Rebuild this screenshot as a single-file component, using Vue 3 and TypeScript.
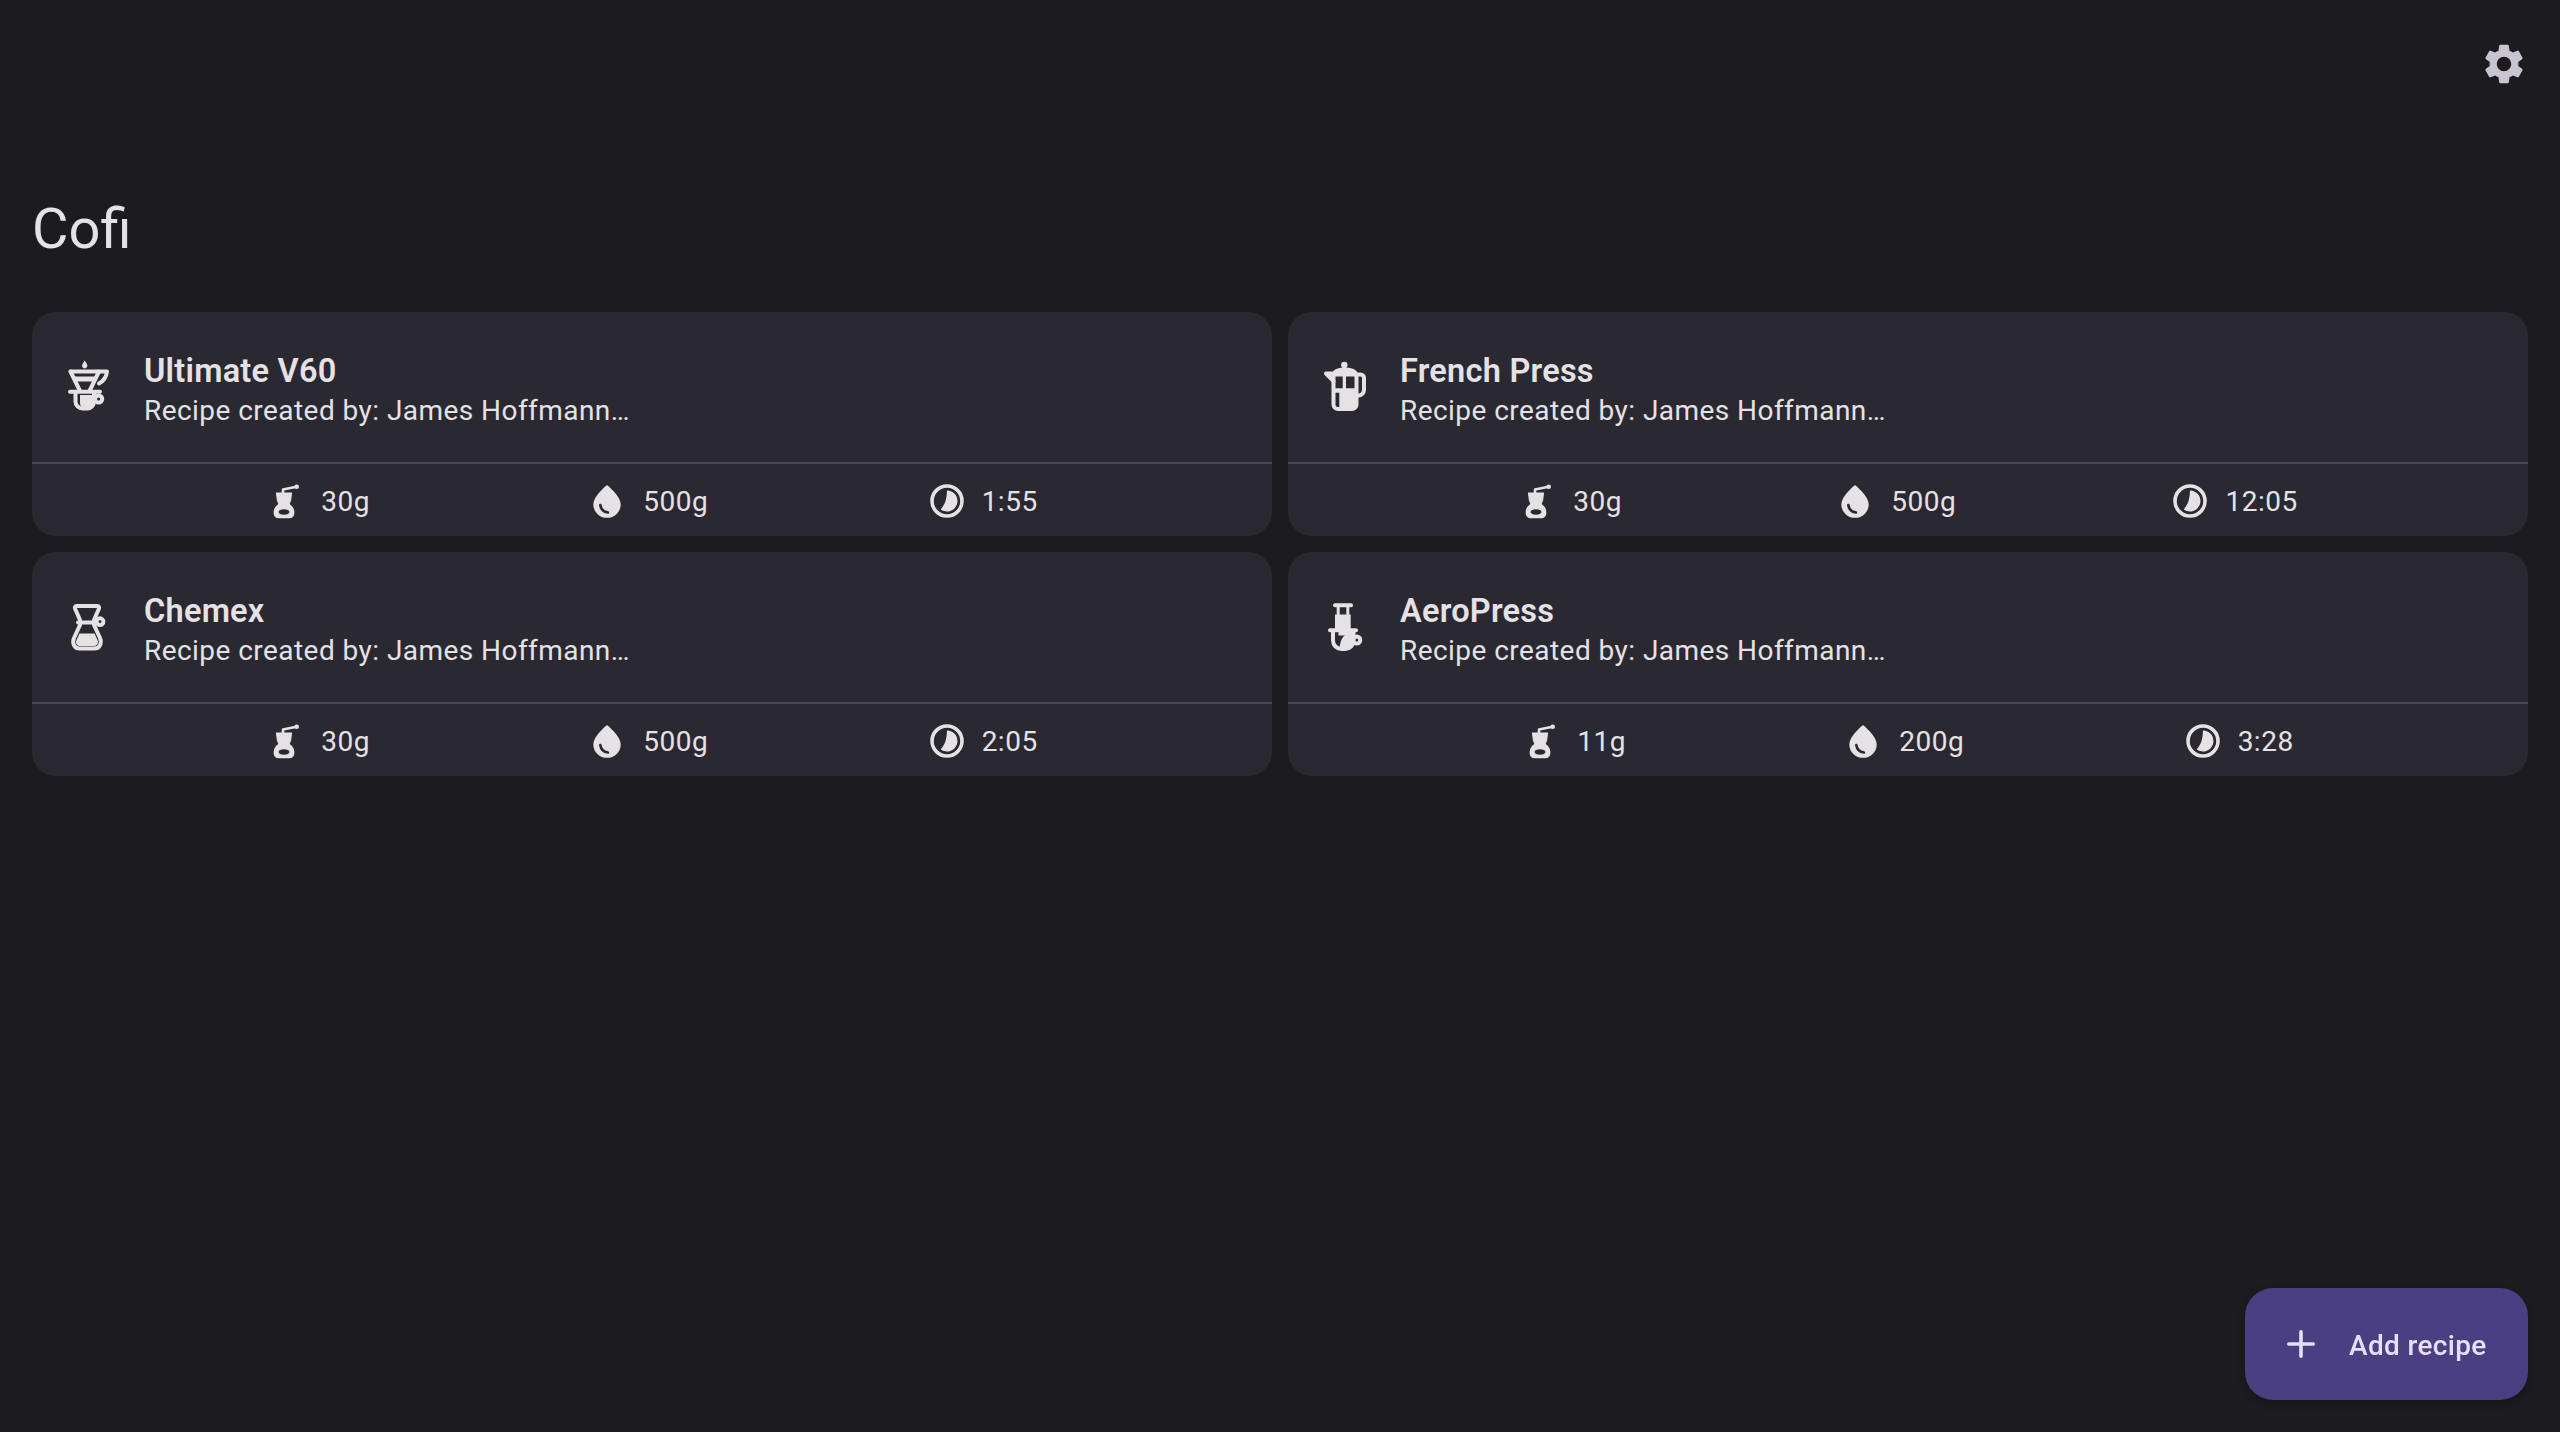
<script setup lang="ts">
interface Recipe {
  name: string
  icon: 'v60' | 'press' | 'chemex' | 'aero'
  coffee: string
  water: string
  time: string
}

const recipes: Recipe[] = [
  { name: 'Ultimate V60', icon: 'v60', coffee: '30g', water: '500g', time: '1:55' },
  { name: 'French Press', icon: 'press', coffee: '30g', water: '500g', time: '12:05' },
  { name: 'Chemex', icon: 'chemex', coffee: '30g', water: '500g', time: '2:05' },
  { name: 'AeroPress', icon: 'aero', coffee: '11g', water: '200g', time: '3:28' },
]
</script>

<template>
  <div class="page">
    <header class="top">
      <svg class="gear" viewBox="0 0 24 24" fill="currentColor">
        <path d="M19.14 12.94c.04-.3.06-.61.06-.94 0-.32-.02-.64-.07-.94l2.03-1.58c.18-.14.23-.41.12-.61l-1.92-3.32c-.12-.22-.37-.29-.59-.22l-2.39.96c-.5-.38-1.03-.7-1.62-.94l-.36-2.54c-.04-.24-.24-.41-.48-.41h-3.84c-.24 0-.43.17-.47.41l-.36 2.54c-.59.24-1.13.57-1.62.94l-2.39-.96c-.22-.08-.47 0-.59.22L2.74 8.87c-.12.21-.08.47.12.61l2.03 1.58c-.05.3-.09.63-.09.94s.02.64.07.94l-2.03 1.58c-.18.14-.23.41-.12.61l1.92 3.32c.12.22.37.29.59.22l2.39-.96c.5.38 1.03.7 1.62.94l.36 2.54c.05.24.24.41.48.41h3.84c.24 0 .44-.17.47-.41l.36-2.54c.59-.24 1.13-.56 1.62-.94l2.39.96c.22.08.47 0 .59-.22l1.92-3.32c.12-.22.07-.47-.12-.61l-2.01-1.58zM12 15.6c-1.98 0-3.6-1.62-3.6-3.6s1.62-3.6 3.6-3.6 3.6 1.62 3.6 3.6-1.62 3.6-3.6 3.6z" />
      </svg>
    </header>

    <h1 class="title">Cofi</h1>

    <main class="grid">
      <article v-for="r in recipes" :key="r.name" class="card">
        <div class="head">
          <svg class="method" viewBox="0 0 64 64" fill="none" stroke="currentColor" stroke-width="4" stroke-linecap="round" stroke-linejoin="round">
            <g v-if="r.icon === 'v60'">
              <path d="M28.700 6.500l2.300 3.800a2.700 2.700 0 1 1-4.600 0z" fill="currentColor" stroke="none" />
              <path d="M14.500 17.500H51C50.500 22 47.500 27 43 29.500" />
              <path d="M14.500 17.500L24 37M43 17.500L33.500 37" />
              <path d="M17.500 22.500H40.500L38.300 27.500H20z" fill="currentColor" stroke="none" />
              <path d="M14 37.800H44" />
              <path d="M19.500 38V47.500a7 7 0 0 0 7 7h5A7 7 0 0 0 38 47.500V38" />
              <path d="M24 41H37V47.500A5.500 5.500 0 0 1 31.500 53H27C25 53 24 51 24 49z" fill="currentColor" stroke="none" />
              <circle cx="42.600" cy="45" r="3.600" />
            </g>
            <g v-else-if="r.icon === 'press'">
              <circle cx="32.300" cy="11" r="3.200" fill="currentColor" stroke="none" />
              <path d="M22 20C22 16.500 27 15 32.500 15S44 16.500 44 20V21H22z" fill="currentColor" stroke="currentColor" stroke-width="3" />
              <path d="M14 19.500H22M14 19.500L21.500 27" />
              <path d="M21.500 21V50.500A4.500 4.500 0 0 0 26 55H40A4.500 4.500 0 0 0 44.500 50.500V21" />
              <path d="M44.500 20.500H48.500A3.500 3.500 0 0 1 52 24V36A5.500 5.500 0 0 1 46.500 41.500H44.500" />
              <path d="M30.700 21H34V34.300H43V54H27.300V38.700H23V34.300H30.700z" fill="currentColor" stroke="none" />
            </g>
            <g v-else-if="r.icon === 'chemex'">
              <path d="M20.500 12H41.500A1.800 1.800 0 0 1 43 14.500L38 26V31L44 44C46 49 44 54.500 38.500 54.500H23.500C18 54.500 16 49 18 44L24 31V26L19 14.500A1.800 1.800 0 0 1 20.500 12Z" />
              <path d="M22 28.500H40" />
              <circle cx="44" cy="27.700" r="3.400" />
              <path d="M23.500 39.500H38.500L41.500 46C43 49.500 41 52 38 52H24C21 52 19 49.500 20.500 46Z" fill="currentColor" stroke="none" />
            </g>
            <g v-else>
              <path d="M23 11.300H39" />
              <path d="M26.200 12V22M35.800 12V22" stroke-width="3" stroke-linecap="butt" />
              <path d="M23 20.500H38.700V36H23z" fill="currentColor" stroke="none" />
              <path d="M18 36.300H44" />
              <path d="M21 37V46.500A8.500 8.500 0 0 0 29.500 55H33A8.500 8.500 0 0 0 41.500 46.500V38" />
              <path d="M26.500 38H41V46C41 50 37 53.500 33 53.500H27.500C28.500 48 29.500 43.500 33 41.500H26.500z" fill="currentColor" stroke="none" />
              <circle cx="44.700" cy="46" r="3.600" />
            </g>
          </svg>
          <div class="copy">
            <div class="name">{{ r.name }}</div>
            <div class="desc">Recipe created by: James Hoffmann…</div>
          </div>
        </div>
        <div class="stats">
          <div class="stat">
            <svg class="small" viewBox="0 0 40 40" fill="none" stroke="currentColor" stroke-width="2.600" stroke-linecap="round" stroke-linejoin="round">
              <path d="M30.500 5.800L17 8.500V12" />
              <circle cx="30.700" cy="5.700" r="2.300" fill="currentColor" stroke="none" />
              <path d="M10.500 12H25.500L24.500 19.500L22.500 24H13.500L11.500 19.500z" fill="currentColor" stroke-width="1.200" />
              <path d="M13 24H23C28.500 28 28.500 36 23 36H13C7.500 36 7.500 28 13 24Z" fill="currentColor" />
              <ellipse cx="18" cy="31" rx="5.400" ry="2.700" fill="#2a2931" stroke="none" />
            </svg>
            <span>{{ r.coffee }}</span>
          </div>
          <div class="stat">
            <svg class="small" viewBox="0 0 40 40">
              <g transform="translate(1 0)">
                <path d="M18 4C18 4 4.300 15 4.300 23.500A13.700 13.300 0 0 0 31.700 23.500C31.700 15 18 4 18 4Z" fill="currentColor" />
                <path d="M11.300 24C12 28.500 15 31.200 19 31.500" fill="none" stroke="#2a2931" stroke-width="2.600" stroke-linecap="round" />
              </g>
            </svg>
            <span>{{ r.water }}</span>
          </div>
          <div class="stat">
            <svg class="small" viewBox="0 0 40 40">
              <circle cx="20" cy="20" r="15" fill="none" stroke="currentColor" stroke-width="3.600" />
              <path d="M20 9.500A10.500 10.500 0 1 1 13.800 28.500C17 24 19.500 21 20 9.500Z" fill="currentColor" />
            </svg>
            <span>{{ r.time }}</span>
          </div>
        </div>
      </article>
    </main>

    <button class="fab" type="button">
      <svg class="plus" viewBox="0 0 28 28" fill="none" stroke="currentColor" stroke-width="3.600" stroke-linecap="round">
        <path d="M14 1.800V26.200M1.800 14H26.200" />
      </svg>
      <span class="fab-label">Add recipe</span>
    </button>
  </div>
</template>

<style>
html, body {
  margin: 0;
  background: #1c1b1f;
}
</style>

<style scoped>
.page {
  min-height: 1432px;
  box-sizing: border-box;
  background: #1c1b1f;
  color: #e6e1e5;
  font-family: Roboto, "Noto Sans", sans-serif;
  padding: 40px 32px 0;
}
.top {
  display: flex;
  justify-content: flex-end;
  height: 48px;
}
.gear {
  width: 48px;
  height: 48px;
  color: #cac4d0;
}
.title {
  margin: 105px 0 0;
  font-size: 56px;
  line-height: 72px;
  font-weight: 400;
  letter-spacing: 0;
}
.grid {
  margin-top: 47px;
  display: grid;
  grid-template-columns: 1fr 1fr;
  gap: 16px;
}
.card {
  height: 224px;
  background: #2a2931;
  border-radius: 24px;
  display: flex;
  flex-direction: column;
}
.head {
  height: 152px;
  box-sizing: border-box;
  display: flex;
  align-items: center;
  padding: 0 0 0 24px;
  gap: 24px;
  border-bottom: 2px solid #48464f;
}
.method {
  width: 64px;
  height: 64px;
  flex: none;
  margin-top: -2px;
}
.copy {
  padding-top: 7px;
}
.name {
  font-size: 32.500px;
  line-height: 40px;
  font-weight: 600;
  letter-spacing: 0.250px;
}
.desc {
  font-size: 28px;
  line-height: 40px;
  letter-spacing: 0.450px;
}
.stats {
  flex: 1;
  display: flex;
  justify-content: space-evenly;
  align-items: center;
  padding: 2px 16px 0;
  font-size: 28px;
  letter-spacing: 0.500px;
}
.stat {
  display: flex;
  align-items: center;
  gap: 15px;
}
.small {
  width: 40px;
  height: 40px;
  flex: none;
}
.fab {
  position: fixed;
  right: 32px;
  bottom: 32px;
  width: 283px;
  height: 112px;
  border: 0;
  border-radius: 28px;
  background: #4a3f80;
  color: #e8deff;
  font-family: inherit;
  font-size: 28px;
  font-weight: 500;
  letter-spacing: 0.350px;
  display: flex;
  align-items: center;
  padding: 0 0 0 42px;
  gap: 34px;
  box-shadow: 0 3px 8px rgba(0, 0, 0, 0.2);
}
.fab-label {
  padding-top: 2px;
}
.plus {
  width: 28px;
  height: 28px;
  flex: none;
}
</style>
